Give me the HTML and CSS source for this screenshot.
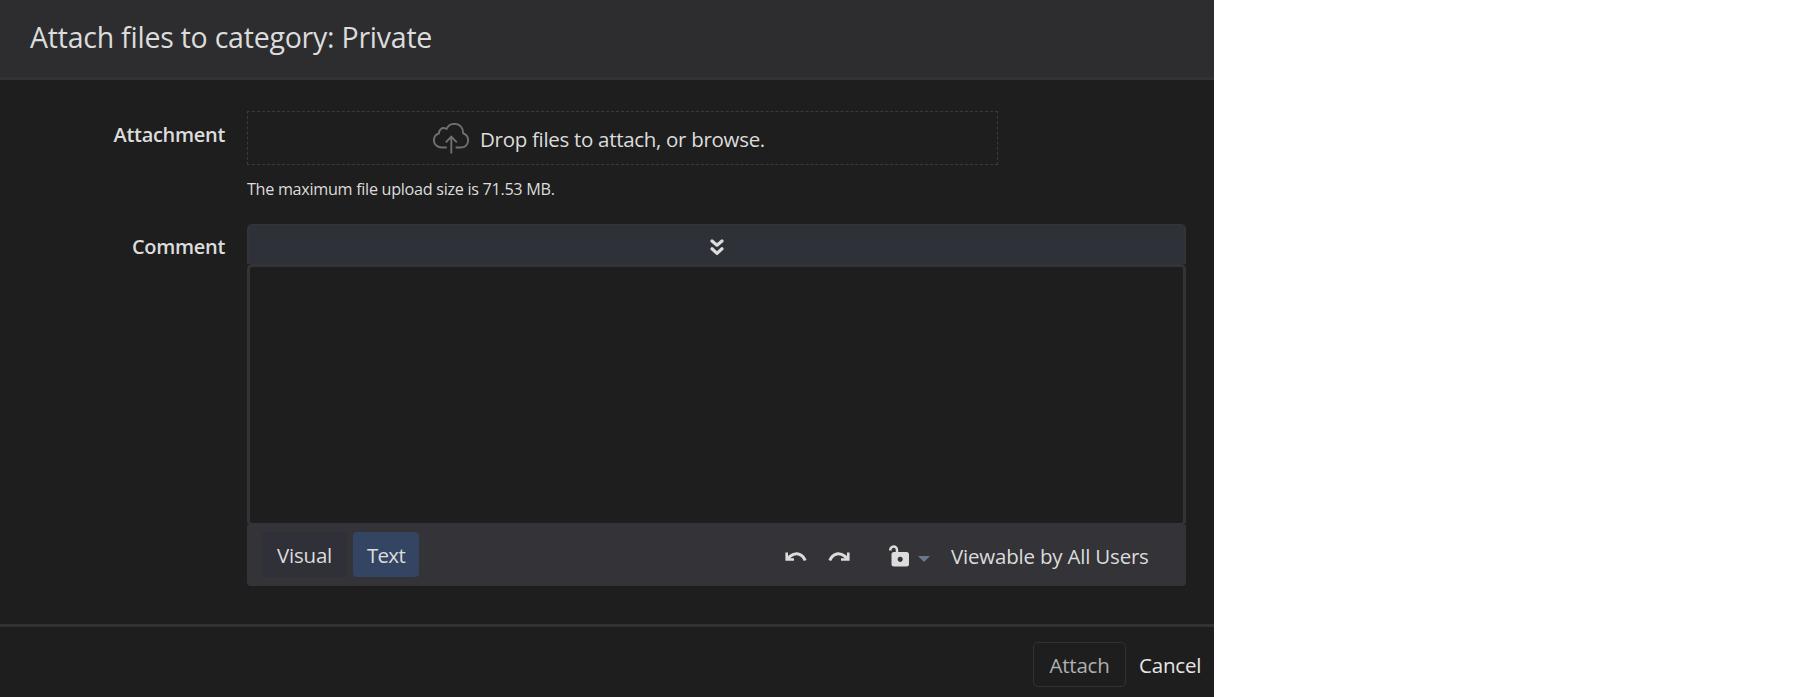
FILE: index.html
```html
<!DOCTYPE html>
<html lang="en">
<head>
<meta charset="utf-8">
<title>Attach files</title>
<link rel="stylesheet" href="styles.css">
</head>
<body>
<main class="dialog">
  <header class="dialog-header"><h1><span class="t-title">Attach files to category: Private</span></h1></header>
  <section class="dialog-body">
    <div class="row">
      <label class="label label-attachment"><span class="t-attachment">Attachment</span></label>
      <div class="field">
        <div class="dropzone">
          <svg class="cloud" width="36" height="31" viewBox="0 0 36 31" fill="none" stroke="#707070" stroke-width="1.9">
            <path d="M13.8 24.5H9C4.500 24.500 .9 21.500 .9 17.200C.9 13.500 3 11.300 6 10.300C5.900 7 8.600 4.500 11.800 5.200C12.500 5.400 13 5.700 13.600 5.900C15 2.800 18 .9 21.400 .9C26.500 .9 30.200 4.500 30.200 10.300C33.400 11.500 35.100 14 35.100 17.200C35.100 21.500 32 24.500 27.500 24.500H22.600"/>
            <path d="M18.300 30.500V14M12.800 19.300L18.300 13.700L23.800 19.300"/>
          </svg>
          <span class="t-drop">Drop files to attach, or browse.</span>
        </div>
        <p class="hint"><span class="t-hint">The maximum file upload size is 71.53 MB.</span></p>
      </div>
    </div>
    <div class="row">
      <label class="label label-comment"><span class="t-comment">Comment</span></label>
      <div class="editor">
        <div class="toolbar">
          <svg width="14" height="17" viewBox="0 0 14 17" fill="none" stroke="#dcdcdc" stroke-width="3.200" stroke-linecap="round" stroke-linejoin="round"><path d="M2 2L7 6.200L12 2M2 9.800L7 14.400L12 9.800"/></svg>
        </div>
        <div class="textarea"></div>
        <div class="editor-footer">
          <span class="tab"><span class="t-visual">Visual</span></span>
          <span class="tab tab-active"><span class="t-text">Text</span></span>
          <svg class="undo" width="22" height="10" viewBox="0 0 22 10"><path d="M1.700 .5V7.500H9" fill="none" stroke="#dcdcdc" stroke-width="2.600"/><path d="M2 7L5.500 4C10 .5 17 .5 20.200 8.500" fill="none" stroke="#dcdcdc" stroke-width="3"/></svg>
          <svg class="redo" width="22" height="10" viewBox="0 0 22 10"><path d="M20.300 .5V7.500H13" fill="none" stroke="#dcdcdc" stroke-width="2.600"/><path d="M20 7L16.500 4C12 .5 5 .5 1.800 8.500" fill="none" stroke="#dcdcdc" stroke-width="3"/></svg>
          <svg class="lock" width="20" height="22" viewBox="0 0 20 22"><path d="M1.300 5.500C1 .4 8 .4 8 5V8" fill="none" stroke="#dcdcdc" stroke-width="2.500"/><path fill="#dcdcdc" fill-rule="evenodd" d="M5 7H17.500Q20 7 20 9.500V19Q20 21.500 17.500 21.500H5Q2.500 21.500 2.500 19V9.500Q2.500 7 5 7ZM11.200 11.700a2.600 2.600 0 1 0 .01 0Z"/></svg>
          <svg class="caret" width="12" height="6" viewBox="0 0 12 6"><path d="M0 0H12L6 6Z" fill="#6b778c"/></svg>
          <span class="t-view">Viewable by All Users</span>
        </div>
      </div>
    </div>
  </section>
  <footer class="dialog-footer">
    <span class="button"><span class="t-attach">Attach</span></span>
    <span class="cancel"><span class="t-cancel">Cancel</span></span>
  </footer>
</main>
</body>
</html>
```
FILE: styles.css
```css
* { box-sizing: border-box; }
body { margin: 0; background: #fff; font-family: "Open Sans", "Noto Sans", sans-serif; font-size: 20.500px; line-height: 28px; color: #dcdcdc; }
.dialog { width: 1214px; height: 697px; background: #1e1e1e; display: flex; flex-direction: column; overflow: hidden; }
.dialog span { white-space: nowrap; }
.dialog-header { height: 80px; background: #2d2d2f; border-bottom: 3px solid #323236; padding: 17px 0 0 30px; }
h1 { margin: 0; font-size: 28.500px; line-height: 40px; font-weight: 400; letter-spacing: -.23px; }
.dialog-body { height: 544px; padding-top: 31px; }
.row { display: flex; gap: 22px; }
.label { width: 225px; text-align: right; font-weight: 600; font-size: 20px; }
.label-attachment { padding-top: 10px; }
.label-comment { padding-top: 9px; }
.t-attachment, .t-comment { letter-spacing: -.3px; }
.t-drop { letter-spacing: -.3px; margin-top: 1px; }
.field { width: 939px; height: 113px; }
.dropzone { width: 751px; height: 54px; border: 1px dashed #3b3b3e; display: flex; align-items: center; gap: 11px; padding-left: 185px; }
.cloud { margin-top: 1px; }
.hint { margin: 11px 0 0; font-size: 16.200px; line-height: 26px; letter-spacing: -.3px; }
.editor { width: 939px; }
.toolbar { height: 40px; background: #2f3138; border: 2px solid #333338; border-top-width: 1px; border-bottom: 0; border-radius: 5px 5px 0 0; display: flex; align-items: center; justify-content: center; padding-top: 5px; }
.textarea { height: 262px; border: 3px solid #333338; border-radius: 5px; }
.editor-footer { height: 61px; margin-top: -1px; background: #333338; border-radius: 0 0 4px 4px; display: flex; align-items: center; padding: 0 0 0 15px; }
.tab { width: 85px; height: 45px; margin: 0 6px 2px 0; border-radius: 4px; background: #303038; display: flex; align-items: center; justify-content: center; letter-spacing: -.2px; }
.tab-active { width: 66px; background: #344563; margin-right: 0; letter-spacing: -.7px; }
.t-visual, .t-text { margin-top: 1px; }
.undo { margin: 3px 0 0 366px; }
.redo { margin: 3px 0 0 21px; }
.lock { margin: 1px 0 0 39px; }
.caret { margin: 7px 21px 0 9px; }
.t-view { letter-spacing: -.2px; }
.dialog-footer { flex: 1; border-top: 3px solid #323236; padding: 15px 0 0 1033px; display: flex; gap: 13px; letter-spacing: -.2px; }
.button { width: 93px; height: 45px; border: 1px solid #323236; border-radius: 5px; display: flex; align-items: center; justify-content: center; color: #aeb0b2; }
.cancel { height: 45px; display: flex; align-items: center; color: #e6e6e6; }
```
